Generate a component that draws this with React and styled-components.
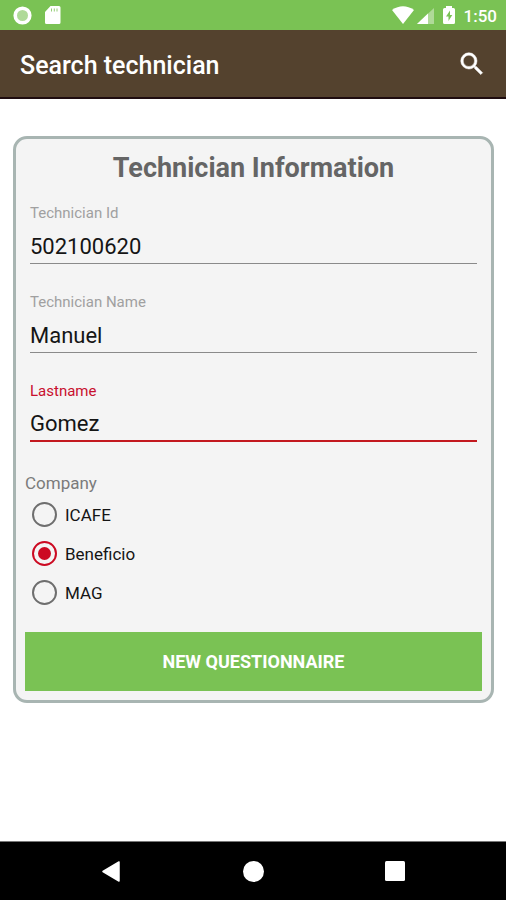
import React from "react";
import styled, { createGlobalStyle } from "styled-components";

const GlobalStyle = createGlobalStyle`
  *, *::before, *::after { box-sizing: border-box; }
  body { margin: 0; background: #fff; font-family: Roboto, "Noto Sans", sans-serif; }
`;

const Screen = styled.div`
  display: flex;
  flex-direction: column;
  min-height: 100vh;
`;

const StatusBar = styled.div`
  display: flex;
  justify-content: space-between;
  align-items: center;
  height: 30px;
  padding: 0 9px 0 13px;
  background: #7ac254;
  color: #fff;
`;

const StatusGroup = styled.div`
  display: flex;
  align-items: center;
  gap: ${(p) => p.$gap}px;
`;

const Clock = styled.time`
  padding-top: 2px;
  font-size: 17px;
  line-height: 20px;
  font-weight: 500;
`;

const AppBar = styled.header`
  display: flex;
  justify-content: space-between;
  align-items: center;
  height: 69px;
  padding: 0 19px 0 20px;
  background: #54422e;
  border-bottom: 2px solid #1f0d10;
  color: #fff;
`;

const AppTitle = styled.h1`
  margin: 0;
  padding-top: 4px;
  font-size: 25px;
  line-height: 32px;
  font-weight: 500;
`;

const IconButton = styled.button`
  display: flex;
  align-items: center;
  justify-content: center;
  padding: 0;
  border: 0;
  background: none;
  color: #fff;
  cursor: pointer;
`;

const Main = styled.main`
  flex: 1;
  padding: 37px 12px 37px 13px;
`;

const Card = styled.form`
  display: flex;
  flex-direction: column;
  padding: 12px 9px 9px;
  border: 3px solid #a8b5b2;
  border-radius: 14px;
  background: #f4f4f4;
`;

const CardTitle = styled.h2`
  margin: 0 0 17px;
  font-size: 27px;
  line-height: 34px;
  font-weight: 700;
  text-align: center;
  color: #656565;
`;

const Fields = styled.div`
  display: flex;
  flex-direction: column;
  gap: 27px;
  padding: 0 5px;
`;

const Field = styled.label`
  display: flex;
  flex-direction: column;
  gap: 3px;
  font-size: 15px;
  line-height: 22px;
  color: ${(p) => (p.$active ? "#c8102e" : "#a0a0a0")};
`;

const TextInput = styled.input`
  width: 100%;
  height: 37px;
  padding: 2px 0 0;
  border: 0;
  border-bottom: ${(p) => (p.$active ? "2px solid #c3191f" : "1px solid #8a8a8a")};
  border-radius: 0;
  outline: 0;
  background: transparent;
  font: 400 22px/30px Roboto, "Noto Sans", sans-serif;
  color: #151515;
`;

const Options = styled.fieldset`
  display: flex;
  flex-direction: column;
  min-width: 0;
  margin: 29px 0 0;
  padding: 0;
  border: 0;
`;

const Legend = styled.legend`
  padding: 0;
  font-size: 17px;
  line-height: 24px;
  color: #7b7b7b;
`;

const Option = styled.label`
  display: flex;
  align-items: center;
  gap: 8px;
  height: 39px;
  padding-left: 7px;
  font-size: 17px;
  line-height: 24px;
  color: #151515;
`;

const Radio = styled.input`
  appearance: none;
  width: 25px;
  height: 25px;
  margin: 0;
  border: 2px solid #6e6e6e;
  border-radius: 50%;

  &:checked {
    border-color: #cc0a22;
    background: #cc0a22;
    background-clip: content-box;
    padding: 4px;
  }
`;

const SubmitButton = styled.button`
  height: 59px;
  margin-top: 20px;
  border: 0;
  background: #7ac254;
  color: #fff;
  font: 700 18px/24px Roboto, "Noto Sans", sans-serif;
  text-transform: uppercase;
  cursor: pointer;
`;

const NavBar = styled.nav`
  display: grid;
  grid-template-columns: repeat(3, 1fr);
  height: 59px;
  padding: 0 40px;
  background: #000;
  border-top: 1px solid #777;
`;

const fields = [
  { id: "technician-id", label: "Technician Id", value: "502100620" },
  { id: "technician-name", label: "Technician Name", value: "Manuel" },
  { id: "lastname", label: "Lastname", value: "Gomez", active: true },
];

const companies = ["ICAFE", "Beneficio", "MAG"];

export default function App() {
  return (
    <Screen>
      <GlobalStyle />
      <StatusBar>
        <StatusGroup $gap={13}>
          <svg width="19" height="19" viewBox="0 0 19 19" aria-hidden="true">
            <circle cx="9.5" cy="9.5" r="6" fill="#fff" opacity=".4" />
            <circle cx="9.5" cy="9.5" r="7.3" fill="none" stroke="#fff" strokeWidth="3.6" />
          </svg>
          <svg width="16" height="18" viewBox="0 0 16 18" aria-hidden="true">
            <path d="M5.5 0H14a1.5 1.5 0 0 1 1.5 1.5v15A1.5 1.5 0 0 1 14 18H1.5A1.5 1.5 0 0 1 0 16.5V6Z" fill="#fff" />
            <path d="M6.5 2.5v3M9.3 2.5v3M12 2.5v3" stroke="#7ac254" strokeWidth="1" opacity=".8" />
          </svg>
        </StatusGroup>
        <StatusGroup $gap={9}>
          <StatusGroup $gap={3}>
            <svg width="22" height="18" viewBox="0 0 22 18" aria-hidden="true">
              <path d="M0 4Q11-3.5 22 4L11 18Z" fill="#fff" />
            </svg>
            <svg width="17" height="18" viewBox="0 0 17 18" aria-hidden="true">
              <path d="M17 2v16H0Z" fill="#fff" opacity=".4" />
              <path d="M11 7.6V18H0Z" fill="#fff" />
            </svg>
          </StatusGroup>
          <svg width="12" height="18" viewBox="0 0 12 18" aria-hidden="true">
            <path d="M3 0h6v2h1.5A1.5 1.5 0 0 1 12 3.5v13a1.5 1.5 0 0 1-1.5 1.5h-9A1.5 1.5 0 0 1 0 16.5v-13A1.5 1.5 0 0 1 1.5 2H3Z" fill="#fff" />
            <path d="M7 4.5 3 10.5h2.500V15l3.800-6H7Z" fill="#7ac254" />
          </svg>
          <Clock>1:50</Clock>
        </StatusGroup>
      </StatusBar>

      <AppBar>
        <AppTitle>Search technician</AppTitle>
        <IconButton type="button" aria-label="Search">
          <svg width="30" height="30" viewBox="0 0 24 24" fill="currentColor" aria-hidden="true">
            <path d="M15.5 14h-.79l-.28-.27A6.471 6.471 0 0 0 16 9.5 6.5 6.5 0 1 0 9.5 16c1.61 0 3.09-.59 4.23-1.57l.27.28v.79l5 4.99L20.49 19l-4.99-5zm-6 0C7.01 14 5 11.99 5 9.5S7.01 5 9.5 5 14 7.01 14 9.5 11.99 14 9.5 14z" stroke="currentColor" strokeWidth=".4" />
          </svg>
        </IconButton>
      </AppBar>

      <Main>
        <Card onSubmit={(e) => e.preventDefault()}>
          <CardTitle>Technician Information</CardTitle>
          <Fields>
            {fields.map((f) => (
              <Field key={f.id} htmlFor={f.id} $active={f.active}>
                {f.label}
                <TextInput id={f.id} type="text" defaultValue={f.value} $active={f.active} />
              </Field>
            ))}
          </Fields>
          <Options>
            <Legend>Company</Legend>
            {companies.map((name) => (
              <Option key={name}>
                <Radio type="radio" name="company" value={name} defaultChecked={name === "Beneficio"} />
                {name}
              </Option>
            ))}
          </Options>
          <SubmitButton type="submit">New questionnaire</SubmitButton>
        </Card>
      </Main>

      <NavBar aria-label="System">
        <IconButton type="button" aria-label="Back">
          <svg width="18" height="21" viewBox="0 0 18 21" aria-hidden="true">
            <path d="M17 1v19L1 10.5Z" fill="#fff" stroke="#fff" strokeWidth="1.5" strokeLinejoin="round" />
          </svg>
        </IconButton>
        <IconButton type="button" aria-label="Home">
          <svg width="21" height="21" viewBox="0 0 21 21" aria-hidden="true">
            <circle cx="10.5" cy="10.5" r="10.5" fill="#fff" />
          </svg>
        </IconButton>
        <IconButton type="button" aria-label="Recent apps">
          <svg width="20" height="20" viewBox="0 0 20 20" aria-hidden="true">
            <rect width="20" height="20" rx="1.5" fill="#fff" />
          </svg>
        </IconButton>
      </NavBar>
    </Screen>
  );
}
